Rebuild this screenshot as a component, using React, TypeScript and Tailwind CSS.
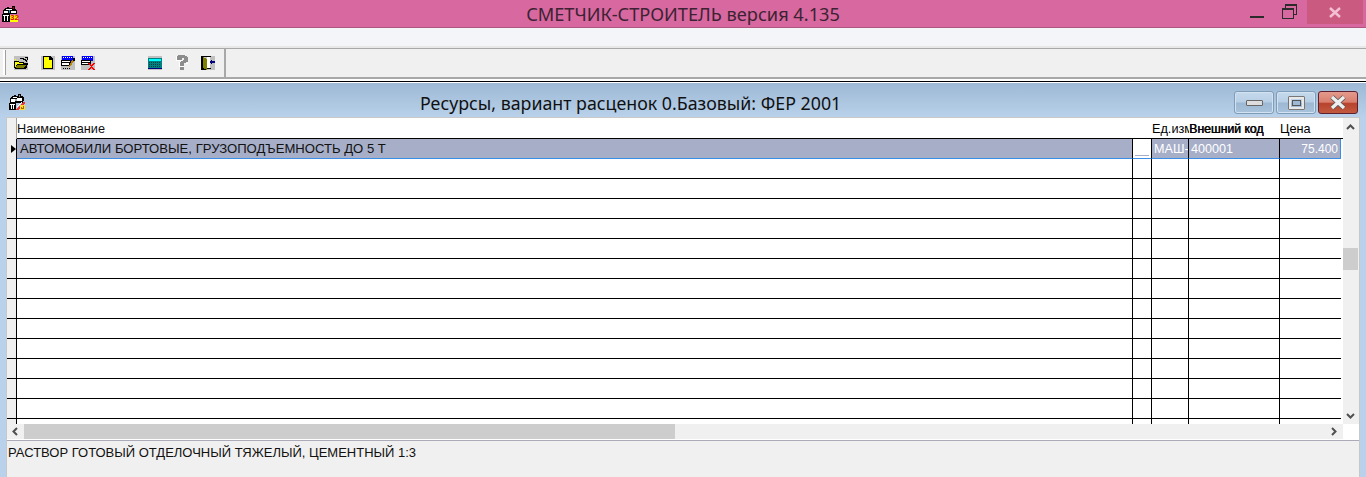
import React from 'react';

const rowCount = 14;
const cols = 'grid-cols-[10px_1115px_20px_37px_91px_61px]';

const PixelIcon: React.FC<{ className?: string; children: React.ReactNode }> = ({ className, children }) => (
    <svg width="14" height="14" viewBox="0 0 14 14" shapeRendering="crispEdges" className={className}>
        {children}
    </svg>
);

// Small app icon in the outer title bar
const AppIcon = () => (
    <div className="relative h-[16px] w-[16px]">
        <svg width="16" height="16" viewBox="0 0 16 16" shapeRendering="crispEdges" className="absolute left-0 top-0">
            <path d="M3 2h2V1h2v1h3V0h3v3h1v1h1v4H1V4h1V3h1z" fill="#000" />
            <path d="M2 5h4v2H2zM9 5h5v2H9zM4 3h6v1H4z" fill="#fff" />
            <path d="M7 4h1v3H7z" fill="#0ab" />
            <path d="M11 1h1v2h-1z" fill="#a00" />
            <path d="M0 8h8v8H0z" fill="#000" />
            <path d="M1 9h6v1H6v5H5v-5H3v5H2v-5H1z" fill="#fff" />
            <path d="M8 9h8v7H8z" fill="#ff0" />
        </svg>
        <span className="absolute left-[8px] top-[8px] font-['Liberation_Sans',sans-serif] text-[8px] font-bold leading-[8px] text-[#e00000]">32</span>
    </div>
);

const ChildIcon = () => (
    <svg width="16" height="16" viewBox="0 0 16 16" shapeRendering="crispEdges">
        <path d="M3 2h2V1h2v1h2V0h3v2h2v1h1v4h-1v2H1V4h1V3h1z" fill="#000" />
        <path d="M2 5h4v3H2zM8 4h5v3H8zM4 3h4v1H4z" fill="#fff" />
        <path d="M6 5h2v2H6z" fill="#9ab" />
        <path d="M10 1h1v2h-1z" fill="#888" />
        <path d="M0 9h7v7H0z" fill="#000" />
        <path d="M1 10h5v1H5v4H4v-4H3v4H2v-4H1z" fill="#fff" />
        <path d="M7 15l7-7h2v1l-7 7H7z" fill="#e33" />
        <path d="M8 12l4-4h1l-5 5z" fill="#fff" />
        <path d="M11 11h5v5h-5z" fill="#fd3" />
        <path d="M12 13h1v1h1v-2h1v3h-3z" fill="#a60" />
    </svg>
);

const SizeButton: React.FC<{ children: React.ReactNode }> = ({ children }) => (
    <div className="flex h-[23px] w-[40px] items-center justify-center rounded-[3px] border border-[#7f9db9] bg-[linear-gradient(#c6d9ec_0%,#b7cfe5_48%,#9db8d3_52%,#a9c3dc_100%)] shadow-[inset_0_0_0_1px_#d2e2f1]">
        {children}
    </div>
);

export default function App() {
    return (
        <div className="flex h-[477px] w-[1366px] flex-col overflow-hidden bg-[#f0f0f0] font-['Liberation_Sans',sans-serif] text-black">
            {/* Outer title bar */}
            <div className="relative flex h-[28px] shrink-0 items-start border-b border-[#b0557f] bg-[#d768a0]">
                <div className="ml-[2px] mt-[6px]">
                    <AppIcon />
                </div>
                <div className="absolute inset-x-0 top-[1px] text-center font-['Noto_Sans',sans-serif] text-[18.2px] leading-[26px] text-[#3c2232]">
                    СМЕТЧИК-СТРОИТЕЛЬ версия 4.135
                </div>
                <div className="ml-auto flex h-[24px]">
                    <div className="flex w-[28px] items-start justify-center pt-[16px]">
                        <div className="h-[2px] w-[14px] bg-[#2b2b2b]" />
                    </div>
                    <div className="relative ml-[11px] mr-[7px] mt-[4px] h-[15px] w-[15px]">
                        <div className="absolute right-0 top-0 h-[11px] w-[12px] border border-t-2 border-[#2b2b2b]" />
                        <div className="absolute bottom-0 left-0 h-[11px] w-[12px] border border-t-2 border-[#2b2b2b] bg-[#d768a0]" />
                    </div>
                    <div className="ml-[3px] mr-[3px] flex w-[56px] items-center justify-center bg-[#cb5a80]">
                        <svg width="12" height="11" viewBox="0 0 12 11">
                            <path d="M1 1l10 9M11 1L1 10" stroke="#f2c0d2" strokeWidth="2.4" />
                        </svg>
                    </div>
                </div>
            </div>

            {/* Menu strip */}
            <div className="h-[18px] shrink-0 bg-[#f4f5f8]" />
            <div className="h-[2px] shrink-0 bg-[#e8e8e8]" />

            {/* Toolbar */}
            <div className="flex h-[31px] shrink-0 border-t border-[#a8a8a8] bg-[#f0f0f0]">
                <div className="flex w-[226px] items-center border-r-2 border-b-2 border-[#a8a8a8] pb-[1px]">
                    <div className="ml-[3px] h-[25px] w-[2px] bg-white shadow-[1px_0_0_#a0a0a0]" />
                    <div className="ml-[9px]">
                        <PixelIcon className="bg-[#c0c0c0]">
                            <path d="M0 5h5v1h5v1h4v1l-2 5H1L0 12z" fill="#000" />
                            <path d="M1 6h4v1h4v1H3l-2 4z" fill="#ff0" />
                            <path d="M3 9h9l-2 3H2z" fill="#808000" />
                            <path d="M1 3h1v1H1zM3 4h1v1H3z" fill="#ff0" />
                            <path d="M6 2h4v1h2v1h1v2h-1V5h-1V4H9V3H6z" fill="#000" />
                            <path d="M11 1h3v3h-1V2h-2z" fill="#000" />
                        </PixelIcon>
                    </div>
                    <div className="ml-[13px]">
                        <PixelIcon className="bg-[#c0c0c0]">
                            <path d="M2 0h7l3 3v10H2z" fill="#000" />
                            <path d="M3 1h5v3h3v8H3z" fill="#ff0" />
                        </PixelIcon>
                    </div>
                    <div className="ml-[6px]">
                        <PixelIcon className="bg-[#c0c0c0]">
                            <path d="M1 0h11v5H1z" fill="#00f" />
                            <path d="M2 1h1v1H2zM4 1h1v1H4zM6 1h1v1H6zM8 1h1v1H8zM10 1h1v1h-1z" fill="#fff" />
                            <path d="M0 4h10v6H0z" fill="#000" />
                            <path d="M1 5h8v1H1zM1 7h7v2H1z" fill="#fff" />
                            <path d="M2 12h1v1H2zM4 12h1v1H4zM6 12h1v1H6zM8 12h1v1H8z" fill="#000" />
                            <path d="M8 10l3-6 2 1-3 5-2 1z" fill="#b8860b" />
                            <path d="M12 2h2v3h-2z" fill="#000" />
                        </PixelIcon>
                    </div>
                    <div className="ml-[6px]">
                        <PixelIcon className="bg-[#c0c0c0]">
                            <path d="M1 0h11v5H1z" fill="#00f" />
                            <path d="M2 1h1v1H2zM4 1h1v1H4zM6 1h1v1H6zM8 1h1v1H8zM10 1h1v1h-1z" fill="#fff" />
                            <path d="M0 4h10v5H0z" fill="#000" />
                            <path d="M1 5h8v1H1zM1 7h6v1H1z" fill="#fff" />
                            <path d="M7 7h2v1h1v1h1V8h1V7h2v1h-1v1h-1v1h-1v1h1v1h1v1h1v1h-2v-1h-1v-1h-1v1H9v1H7v-1h1v-1h1v-1h1v-1H9V9H8V8H7z" fill="#f00" />
                        </PixelIcon>
                    </div>
                    <div className="ml-[53px]">
                        <PixelIcon className="bg-[#c0c0c0]">
                            <path d="M0 2h14v10H0z" fill="#008080" />
                            <path d="M1 3h12v2H1z" fill="#0ff" />
                            <path d="M1 6h1v1H1zM3 6h1v1H3zM5 6h1v1H5zM7 6h1v1H7zM9 6h1v1H9zM11 6h1v1h-1zM1 8h1v1H1zM3 8h1v1H3zM5 8h1v1H5zM7 8h1v1H7zM9 8h1v1H9zM11 8h1v1h-1zM1 10h1v1H1zM3 10h1v1H3zM5 10h1v1H5zM7 10h1v1H7zM9 10h1v1H9zM11 10h1v1h-1z" fill="#004040" />
                            <path d="M0 12h14v1H0z" fill="#000080" />
                        </PixelIcon>
                    </div>
                    <div className="ml-[13px]">
                        <svg width="14" height="15" viewBox="0 0 14 15" shapeRendering="crispEdges">
                            <path d="M3 0h7v1h2v1h1v5h-2v1H9v3H5V7h1V6h2V5h1V3H7v2H2V1h1z" fill="#8c8c8c" />
                            <path d="M5 12h4v3H5z" fill="#8c8c8c" />
                            <path d="M1 1h1v4h5v1H1zM11 8h2v1h-2zM4 7h1v4h4v1H4z" fill="#fff" />
                        </svg>
                    </div>
                    <div className="ml-[12px]">
                        <PixelIcon className="bg-[#c0c0c0]">
                            <path d="M0 0h10v1H1v11h9v1H6v1H0z" fill="#000" />
                            <path d="M6 1h3v11H6z" fill="#fff" />
                            <path d="M1 0l5 3v11l-5-3z" fill="#808000" />
                            <path d="M1 0h1v12H1z" fill="#000" />
                            <path d="M8 6l3-3v2h3v2h-3v2z" fill="#000080" />
                        </PixelIcon>
                    </div>
                </div>
                <div className="flex-1 border-b-2 border-[#a8a8a8]" />
            </div>

            <div className="h-[2px] shrink-0 bg-white" />
            <div className="h-[1px] shrink-0 bg-black" />
            <div className="h-[1px] shrink-0 bg-white" />

            {/* Inner window */}
            <div className="flex min-h-0 flex-1 flex-col bg-[#b9d1ea] px-[6px]">
                <div className="relative -mx-[6px] flex h-[34px] shrink-0 items-start bg-gradient-to-b from-[#9db9d5] to-[#b9d1ea]">
                    <div className="ml-[9px] mt-[11px]">
                        <ChildIcon />
                    </div>
                    <div className="absolute left-[420px] top-[7px] whitespace-nowrap font-['Noto_Sans',sans-serif] text-[17.8px] leading-[26px] text-[#111]">
                        Ресурсы, вариант расценок 0.Базовый: ФЕР 2001
                    </div>
                    <div className="ml-auto mr-[8px] mt-[8px] flex gap-[2px]">
                        <SizeButton>
                            <div className="h-[6px] w-[17px] rounded-[1px] border border-[#666] bg-[#ddd]" />
                        </SizeButton>
                        <SizeButton>
                            <div className="flex h-[14px] w-[17px] items-center justify-center rounded-[1px] border-[3px] border-[#e8e8e8] outline outline-1 -outline-offset-1 outline-[#777]">
                                <div className="h-[6px] w-[9px] border border-[#555] bg-[#9db9d5]" />
                            </div>
                        </SizeButton>
                        <div className="flex h-[23px] w-[40px] items-center justify-center rounded-[3px] border border-[#5c2030] bg-[linear-gradient(#e39a8c_0%,#d97f6f_48%,#b8432c_55%,#c25a40_100%)]">
                            <svg width="18" height="15" viewBox="0 0 18 15">
                                <path d="M3 2l12 11M15 2L3 13" stroke="#555" strokeWidth="5" />
                                <path d="M3 2l12 11M15 2L3 13" stroke="#eee" strokeWidth="3.4" />
                            </svg>
                        </div>
                    </div>
                </div>

                {/* Grid */}
                <div className="flex min-h-0 flex-1 flex-col border-x border-t border-[#c8c8c8] bg-white">
                    <div className="flex min-h-0 flex-1">
                        <div className="min-w-0 flex-1 overflow-hidden">
                            <div className={`grid h-[20px] ${cols} text-[12.7px] leading-[22px]`}>
                                <div className="bg-[#f0f0f0] shadow-[inset_-1px_0_0_#a0a0a0]" />
                                <div className="text-[#111]">Наименование</div>
                                <div />
                                <div className="overflow-hidden whitespace-nowrap">Ед.изм</div>
                                <div className="overflow-hidden whitespace-nowrap text-[12.2px] [text-shadow:0.6px_0_0_#000]">Внешний код</div>
                                <div>Цена</div>
                            </div>
                            <div className={`grid h-[21px] grid-rows-[20px] ${cols} border-t border-black text-[13.1px] leading-[19px]`}>
                                <div className="flex items-center border-r border-black bg-[#f0f0f0] pl-[4px]">
                                    <div className="h-0 w-0 border-y-[4px] border-l-[5px] border-y-transparent border-l-black" />
                                </div>
                                <div className="overflow-hidden whitespace-nowrap border-b border-[#3a8ee6] bg-[#a6aec8] pl-[3px] text-[#111]">
                                    АВТОМОБИЛИ БОРТОВЫЕ, ГРУЗОПОДЪЕМНОСТЬ ДО 5 Т
                                </div>
                                <div className="relative border-x border-b border-x-black border-b-[#3a8ee6]">
                                    <div className="absolute bottom-[2px] left-[2px] h-[1px] w-[14px] bg-[#a6aec8]" />
                                </div>
                                <div className="overflow-hidden whitespace-nowrap border-r border-b border-r-black border-b-[#3a8ee6] bg-[#a6aec8] pl-[2px] text-[12.6px] leading-[20px] text-white">
                                    МАШ-
                                </div>
                                <div className="border-r border-b border-r-black border-b-[#3a8ee6] bg-[#a6aec8] pl-[2px] text-[12.6px] leading-[20px] text-white">
                                    400001
                                </div>
                                <div className="border-r border-b border-r-[#3a8ee6] border-b-[#3a8ee6] bg-[#a6aec8] pr-[2px] text-right text-[12px] leading-[20px] text-white">
                                    75.400
                                </div>
                            </div>
                            {Array.from({ length: rowCount }).map((_, i) => (
                                <div key={i} className={`grid h-[20px] ${cols}`}>
                                    <div className="border-r border-b border-black bg-[#f0f0f0]" />
                                    <div className="border-b border-black" />
                                    <div className="border-x border-b border-black" />
                                    <div className="border-r border-b border-black" />
                                    <div className="border-r border-b border-black" />
                                    <div className="border-b border-black" />
                                </div>
                            ))}
                        </div>
                        {/* Vertical scrollbar */}
                        <div className="relative w-[16px] shrink-0 bg-[#f0f0f0]">
                            <svg width="9" height="7" viewBox="0 0 9 7" className="absolute left-[3px] top-[6px]">
                                <path d="M1 5l3.5-3.5L8 5" fill="none" stroke="#505050" strokeWidth="2" />
                            </svg>
                            <div className="absolute left-0 top-[130px] h-[22px] w-[15px] bg-[#cdcdcd]" />
                            <svg width="9" height="7" viewBox="0 0 9 7" className="absolute bottom-[5px] left-[3px]">
                                <path d="M1 2l3.5 3.5L8 2" fill="none" stroke="#505050" strokeWidth="2" />
                            </svg>
                        </div>
                    </div>
                    {/* Horizontal scrollbar */}
                    <div className="flex h-[16px] shrink-0 bg-white">
                        <div className="flex h-[15px] flex-1 items-center bg-[#f0f0f0]">
                            <svg width="7" height="9" viewBox="0 0 7 9" className="ml-[5px] shrink-0">
                                <path d="M5 1L1.5 4.5 5 8" fill="none" stroke="#505050" strokeWidth="2" />
                            </svg>
                            <div className="ml-[5px] h-[15px] w-[651px] bg-[#cdcdcd]" />
                            <svg width="7" height="9" viewBox="0 0 7 9" className="ml-auto mr-[6px] shrink-0">
                                <path d="M2 1l3.5 3.5L2 8" fill="none" stroke="#505050" strokeWidth="2" />
                            </svg>
                        </div>
                        <div className="w-[16px] shrink-0" />
                    </div>
                    {/* Status panel */}
                    <div className="h-[37px] shrink-0 border-t border-[#aaaab8] bg-[#f0f0f0] pl-[1px] pt-[4px] text-[13px] leading-[15px] text-[#111]">
                        РАСТВОР ГОТОВЫЙ ОТДЕЛОЧНЫЙ ТЯЖЕЛЫЙ, ЦЕМЕНТНЫЙ 1:3
                    </div>
                </div>
            </div>
        </div>
    );
}
